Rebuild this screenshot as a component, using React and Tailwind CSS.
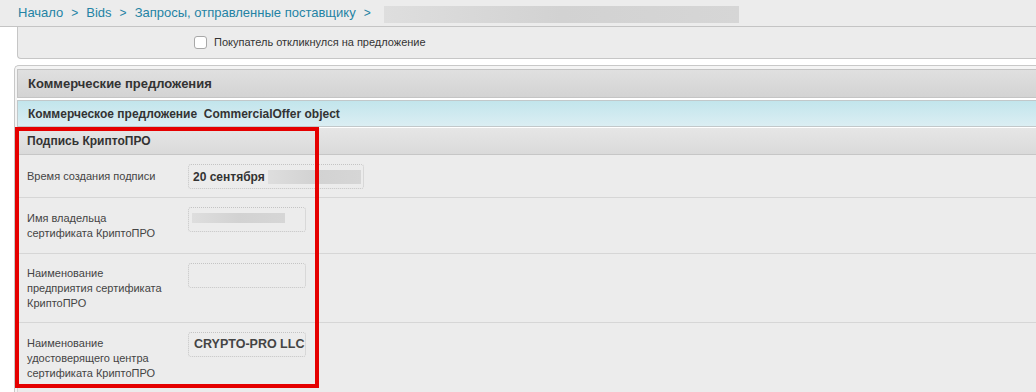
import React from "react";

const Blur = ({ className }) => (
  <div className={"bg-gradient-to-r from-[#dedede] via-[#d2d2d2] to-[#d6d6d6] " + className} />
);

function Row({ label, h, children }) {
  return (
    <div className={"flex border-b border-[#d6d6d6] shadow-[0_1px_0_#ffffff] bg-[#ececec] " + h}>
      <div className="w-[170px] pl-[9px] flex items-center text-[11px] leading-[15px] text-[#444]">
        {label}
      </div>
      {children}
    </div>
  );
}

export default function App() {
  return (
    <div className="w-[1036px] h-[392px] bg-white overflow-hidden relative font-['Liberation_Sans',Arial,sans-serif]">
      {/* breadcrumb */}
      <div className="h-[27px] bg-[#ececec] border-b border-[#c4c4c4] flex items-center pl-[18px] text-[13px] text-[#2483a4]">
        <span>Начало</span>
        <span className="mx-[8px] text-[12px]">&gt;</span>
        <span>Bids</span>
        <span className="mx-[8px] text-[12px]">&gt;</span>
        <span>Запросы, отправленные поставщику</span>
        <span className="mx-[8px] text-[12px]">&gt;</span>
        <Blur className="w-[355px] h-[17px] ml-[5px] mt-[2px]" />
      </div>

      {/* checkbox panel */}
      <div className="ml-[17px] h-[32px] bg-[#ececec] border-l border-b border-[#c6c6c6] rounded-bl-[4px] flex items-center pl-[176px]">
        <div className="w-[13px] h-[13px] bg-white border border-[#a8a8a8] rounded-[3px]" />
        <span className="ml-[7px] text-[11px] text-[#333]">Покупатель откликнулся на предложение</span>
      </div>

      {/* main panel */}
      <div className="ml-[14px] mt-[6px] border-l border-t border-[#c8c8c8] rounded-tl-[5px] pl-[2px] pt-[3px] bg-[#f4f4f4]">
        <div className="h-[29px] bg-gradient-to-b from-[#e0e0e0] to-[#d3d3d3] border-t border-b border-l border-[#c4c4c4] flex items-center pl-[10px] text-[13px] font-bold text-[#333]">
          Коммерческие предложения
        </div>
        <div className="h-[2px] bg-white" />
        <div className="h-[27px] bg-gradient-to-b from-[#c2e5ec] to-[#dbeef3] border-t border-b border-l border-[#c2c8ca] flex items-center pl-[10px] text-[12px] font-bold text-[#333]">
          Коммерческое предложение&nbsp;&nbsp;CommercialOffer object
        </div>
        <div className="h-[1px] bg-white" />
        <div className="h-[27px] bg-gradient-to-b from-[#e6e6e6] to-[#dadada] border-b border-l border-[#c6c6c6] flex items-center pl-[9px] text-[12px] font-bold text-[#333]">
          Подпись КриптоПРО
        </div>
        <div className="border-l border-[#d8d8d8]">
          <Row label="Время создания подписи" h="h-[43px]">
            <div className="mt-[9px] w-[176px] h-[25px] border border-dotted border-[#c4c4c4] rounded-[3px] flex items-center pl-[4px] text-[12px] font-bold text-[#333]">
              20 сентября
              <Blur className="w-[93px] h-[14px] ml-[3px]" />
            </div>
          </Row>
          <Row
            label={<span>Имя владельца<br />сертификата КриптоПРО</span>}
            h="h-[56px]"
          >
            <div className="mt-[9px] w-[118px] h-[25px] border border-dotted border-[#c4c4c4] rounded-[3px] flex items-start pt-[5px] pl-[3px]">
              <Blur className="w-[93px] h-[10px]" />
            </div>
          </Row>
          <Row
            label={<span>Наименование<br />предприятия сертификата<br />КриптоПРО</span>}
            h="h-[69px]"
          >
            <div className="mt-[9px] w-[118px] h-[25px] border border-dotted border-[#c4c4c4] rounded-[3px]" />
          </Row>
          <Row
            label={<span>Наименование<br />удостоверящего центра<br />сертификата КриптоПРО</span>}
            h="h-[72px]"
          >
            <div className="mt-[9px] w-[118px] h-[25px] border border-dotted border-[#c4c4c4] rounded-[3px] flex items-center pl-[5px] whitespace-nowrap overflow-hidden text-[12.5px] font-bold text-[#444]">
              CRYPTO-PRO LLC
            </div>
          </Row>
        </div>
      </div>

      {/* annotation */}
      <div className="absolute left-[15px] top-[127px] w-[304px] h-[261px] border-[4px] border-[#e50000] pointer-events-none" />
    </div>
  );
}
